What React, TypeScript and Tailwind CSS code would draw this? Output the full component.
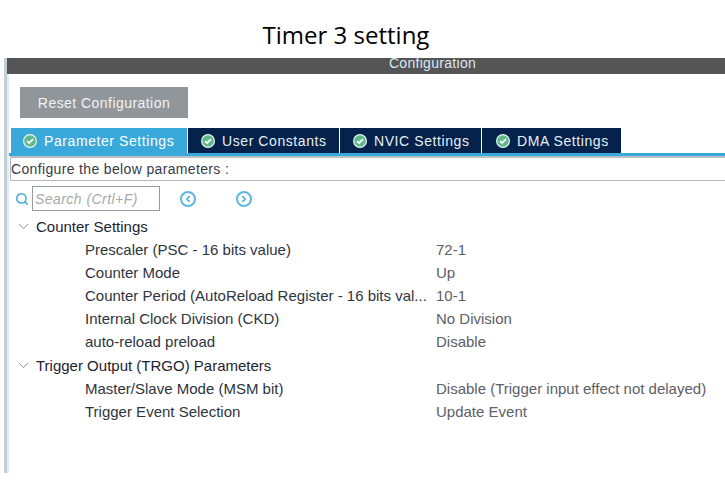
import { ChevronDown, ChevronLeft, ChevronRight, Search } from "lucide-react";

const tabs = [
  { label: "Parameter Settings", width: "w-[177px]", pad: "pl-[12px]", active: true },
  { label: "User Constants", width: "w-[152px]", pad: "pl-[13px]", active: false },
  { label: "NVIC Settings", width: "w-[142px]", pad: "pl-[13px]", active: false },
  { label: "DMA Settings", width: "w-[140px]", pad: "pl-[14px]", active: false },
];

const groups = [
  {
    title: "Counter Settings",
    rows: [
      ["Prescaler (PSC - 16 bits value)", "72-1"],
      ["Counter Mode", "Up"],
      ["Counter Period (AutoReload Register - 16 bits val...", "10-1"],
      ["Internal Clock Division (CKD)", "No Division"],
      ["auto-reload preload", "Disable"],
    ],
  },
  {
    title: "Trigger Output (TRGO) Parameters",
    rows: [
      ["Master/Slave Mode (MSM bit)", "Disable (Trigger input effect not delayed)"],
      ["Trigger Event Selection", "Update Event"],
    ],
  },
];

function CheckBadge() {
  return (
    <svg viewBox="0 0 14 14" className="h-[14px] w-[14px] shrink-0">
      <circle cx="7" cy="7" r="6.4" fill="#5fb98a" stroke="#e6f3ee" strokeWidth="1.2" />
      <path d="M4 7.1 6.1 9l3.9-3.9" fill="none" stroke="#fff" strokeWidth="1.8" />
    </svg>
  );
}

function NavButton({ children }: { children: React.ReactNode }) {
  return (
    <span className="flex h-4 w-4 items-center justify-center rounded-full border-2 border-[#5db8e2] text-[#39a9dc]">
      {children}
    </span>
  );
}

export default function App() {
  return (
    <div className="flex h-[490px] w-[725px] flex-col overflow-hidden bg-white font-['Liberation_Sans',sans-serif]">
      <h1 className="h-[58px] pt-[18px] pr-[33px] text-center font-['Open_Sans',sans-serif] text-[24px] leading-[34px] text-black">
        Timer 3 setting
      </h1>

      <div className="ml-1 flex h-[415px] border-l-[3px] border-[#c3cfd6]">
        <div className="min-w-0 flex-1 border-l-2 border-[#e6eaed] pl-px">
          <div className="-ml-[3px] h-4 bg-[#545554] pl-[3px] text-center text-sm leading-[10px] tracking-[0.3px] text-[#dbe8f3]">
            <span className="ml-[130px]">Configuration</span>
          </div>

          <div className="pt-[13px] pl-[10px]">
            <button className="h-[31px] w-[168px] bg-[#90969a] text-sm tracking-[0.45px] text-[#f2f3f3]">
              Reset Configuration
            </button>
          </div>

          <div className="mt-[10px] flex h-[25px] pl-px">
            {tabs.map((tab) => (
              <div
                key={tab.label}
                className={`flex ${tab.width} ${tab.pad} items-center gap-[7px] border-r border-white text-sm tracking-[0.58px] text-[#e8eff5] ${
                  tab.active ? "bg-[#39a9dc] !text-white" : "bg-[#04224b]"
                }`}
              >
                <CheckBadge />
                {tab.label}
              </div>
            ))}
          </div>
          <div className="-ml-px h-[3px] bg-[#39a9dc]" />
          <div className="h-[2px] bg-[#bcc0c3]" />

          <div className="flex h-[23px] items-center border-b border-l border-[#b4b7b9] text-sm tracking-[0.35px] text-[#3a3a46]">
            Configure the below parameters :
          </div>

          <div className="mt-[5px] flex h-[25px] items-center pl-[5px]">
            <Search className="h-[14px] w-[14px] text-[#39a9dc]" strokeWidth={2.5} />
            <div className="ml-[3px] flex h-[25px] w-[128px] items-center border border-[#9a9da0] pl-[2px] text-sm tracking-[0.45px] text-[#a7a9ab] italic">
              Search (Crtl+F)
            </div>
            <span className="ml-5">
              <NavButton>
                <ChevronLeft className="h-[10px] w-[10px]" strokeWidth={3.5} />
              </NavButton>
            </span>
            <span className="ml-10">
              <NavButton>
                <ChevronRight className="h-[10px] w-[10px]" strokeWidth={3.5} />
              </NavButton>
            </span>
          </div>

          <div className="mt-[4px] text-[15px] leading-[23.1px] text-[#2f3440]">
            {groups.map((group) => (
              <div key={group.title}>
                <div className="flex items-center pl-[5px] text-[#1d2330]">
                  <ChevronDown className="h-[17px] w-[17px] text-[#7f858a]" strokeWidth={1.25} />
                  <span className="ml-[4px]">{group.title}</span>
                </div>
                {group.rows.map(([name, value]) => (
                  <div key={name} className="flex pl-[75px]">
                    <span className="w-[351px] shrink-0 whitespace-nowrap">{name}</span>
                    <span className="whitespace-nowrap text-[#5c6068]">{value}</span>
                  </div>
                ))}
              </div>
            ))}
          </div>
        </div>
      </div>
    </div>
  );
}
